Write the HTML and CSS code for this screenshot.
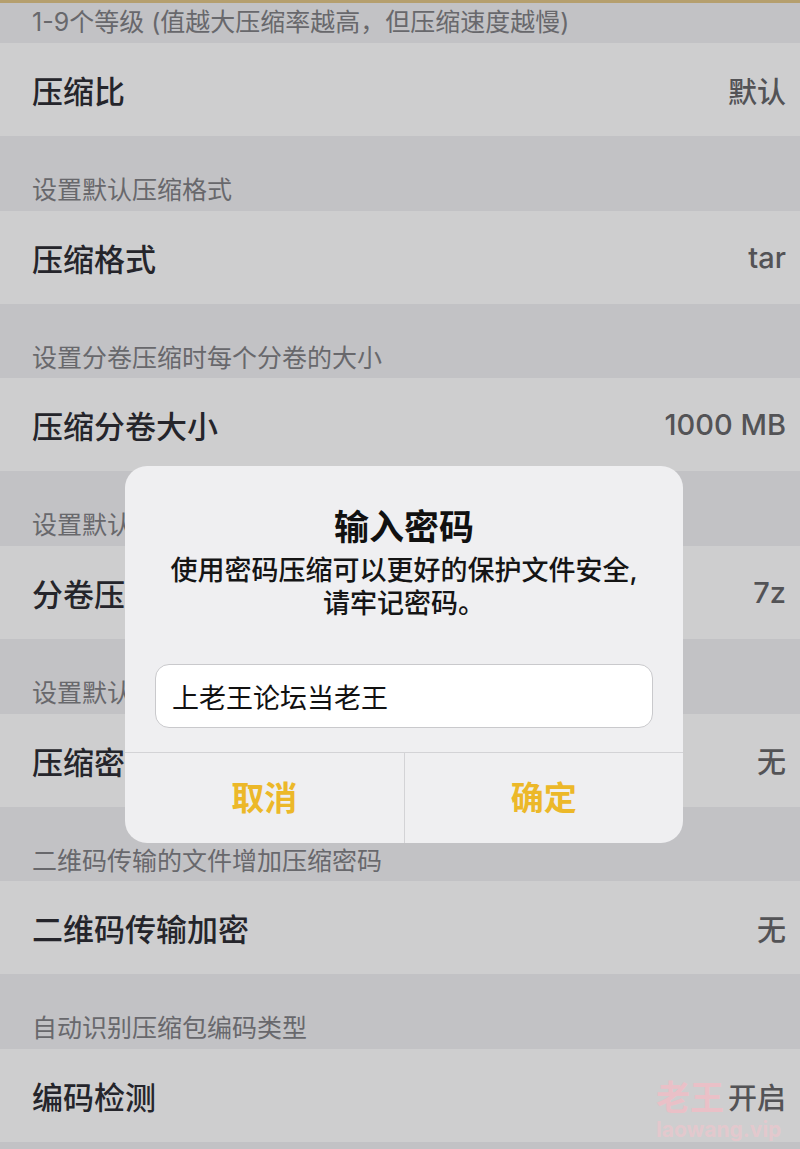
FILE: index.html
```html
<!DOCTYPE html>
<html lang="zh-CN">
<head>
    <meta charset="UTF-8">
    <meta name="viewport" content="width=device-width, initial-scale=1.0">
    <title>压缩设置</title>

    <link rel="stylesheet" href="styles.css">
</head>
<body>

    <div class="top-line"></div>

    <div class="settings">
        <div class="note first">1-9个等级 (值越大压缩率越高，但压缩速度越慢)</div>
        <div class="row"><span class="label">压缩比</span><span class="value">默认</span></div>

        <div class="note">设置默认压缩格式</div>
        <div class="row"><span class="label">压缩格式</span><span class="value">tar</span></div>

        <div class="note">设置分卷压缩时每个分卷的大小</div>
        <div class="row"><span class="label">压缩分卷大小</span><span class="value">1000 MB</span></div>

        <div class="note">设置默认分卷压缩格式</div>
        <div class="row"><span class="label">分卷压缩格式</span><span class="value">7z</span></div>

        <div class="note">设置默认压缩密码</div>
        <div class="row"><span class="label">压缩密码</span><span class="value">无</span></div>

        <div class="note">二维码传输的文件增加压缩密码</div>
        <div class="row"><span class="label">二维码传输加密</span><span class="value">无</span></div>

        <div class="note">自动识别压缩包编码类型</div>
        <div class="row"><span class="label">编码检测</span><span class="value">开启</span></div>
    </div>

    <div class="alert">
        <div class="alert-body">
            <h2 class="alert-title">输入密码</h2>
            <p class="alert-message">使用密码压缩可以更好的保护文件安全,<br>请牢记密码。</p>
            <div class="alert-input">上老王论坛当老王</div>
        </div>
        <div class="alert-buttons">
            <button class="cancel">取消</button>
            <button class="confirm">确定</button>
        </div>
    </div>

    <div class="watermark">
        <span class="wm-name">老王</span>
        <span class="wm-site">laowang.vip</span>
    </div>

</body>
</html>
```

FILE: styles.css
```css
body {
    font-family: Inter, "Noto Sans CJK SC", "Noto Sans", sans-serif;
    background-color: #c2c2c5;
    margin: 0;
    padding: 0;
    width: 800px;
    height: 1149px;
    overflow: hidden;
    position: relative;
}

.top-line {
    height: 3px;
    background-color: #b59f6e;
}

.note {
    height: 74.7px;
    box-sizing: border-box;
    padding: 37px 32px 0;
    font-size: 25px;
    line-height: 34px;
    color: #68686c;
    background-color: #c2c2c5;
}

.note.first {
    height: 40px;
    padding-top: 2px;
}

.row {
    height: 93px;
    display: flex;
    align-items: center;
    justify-content: space-between;
    padding: 0 14px 0 32px;
    background-color: #cececf;
}

.label {
    font-size: 31px;
    font-weight: 500;
    color: #25252b;
}

.value {
    font-size: 29px;
    font-weight: 500;
    color: #535356;
}

/* alert */
.alert {
    position: absolute;
    top: 466px;
    left: 125px;
    width: 558px;
    height: 377px;
    background-color: #efeff1;
    border-radius: 22px;
    display: flex;
    flex-direction: column;
    overflow: hidden;
}

.alert-body {
    flex: 1;
    display: flex;
    flex-direction: column;
    align-items: center;
    padding: 39px 30px 0;
}

.alert-title {
    margin: 0;
    font-size: 35px;
    font-weight: 700;
    line-height: 44px;
    color: #111;
}

.alert-message {
    margin: 5px 0 0;
    font-size: 27px;
    font-weight: 500;
    line-height: 33px;
    text-align: center;
    color: #151515;
}

.alert-input {
    align-self: stretch;
    margin-top: 44px;
    height: 64px;
    box-sizing: border-box;
    padding: 0 16px;
    display: flex;
    align-items: center;
    background-color: #fff;
    border: 1px solid #c9c9cc;
    border-radius: 14px;
    font-size: 27px;
    color: #111;
}

.alert-buttons {
    height: 90px;
    display: flex;
    border-top: 1px solid #d3d3d6;
}

.alert-buttons button {
    flex: 1;
    border: none;
    background: none;
    font-family: inherit;
    font-size: 33px;
    font-weight: 700;
    color: #ecb829;
    padding: 0 0 4px;
}

.alert-buttons .cancel {
    border-right: 1px solid #d3d3d6;
}

/* watermark over the last row */
.watermark {
    position: absolute;
    left: 656px;
    top: 1078px;
    display: flex;
    flex-direction: column;
    pointer-events: none;
}

.wm-name {
    font-size: 34px;
    font-weight: 700;
    line-height: 40px;
    color: rgba(247, 186, 196, 0.7);
}

.wm-site {
    font-size: 21px;
    font-weight: 700;
    line-height: 24px;
    color: rgba(247, 196, 204, 0.55);
}
```
